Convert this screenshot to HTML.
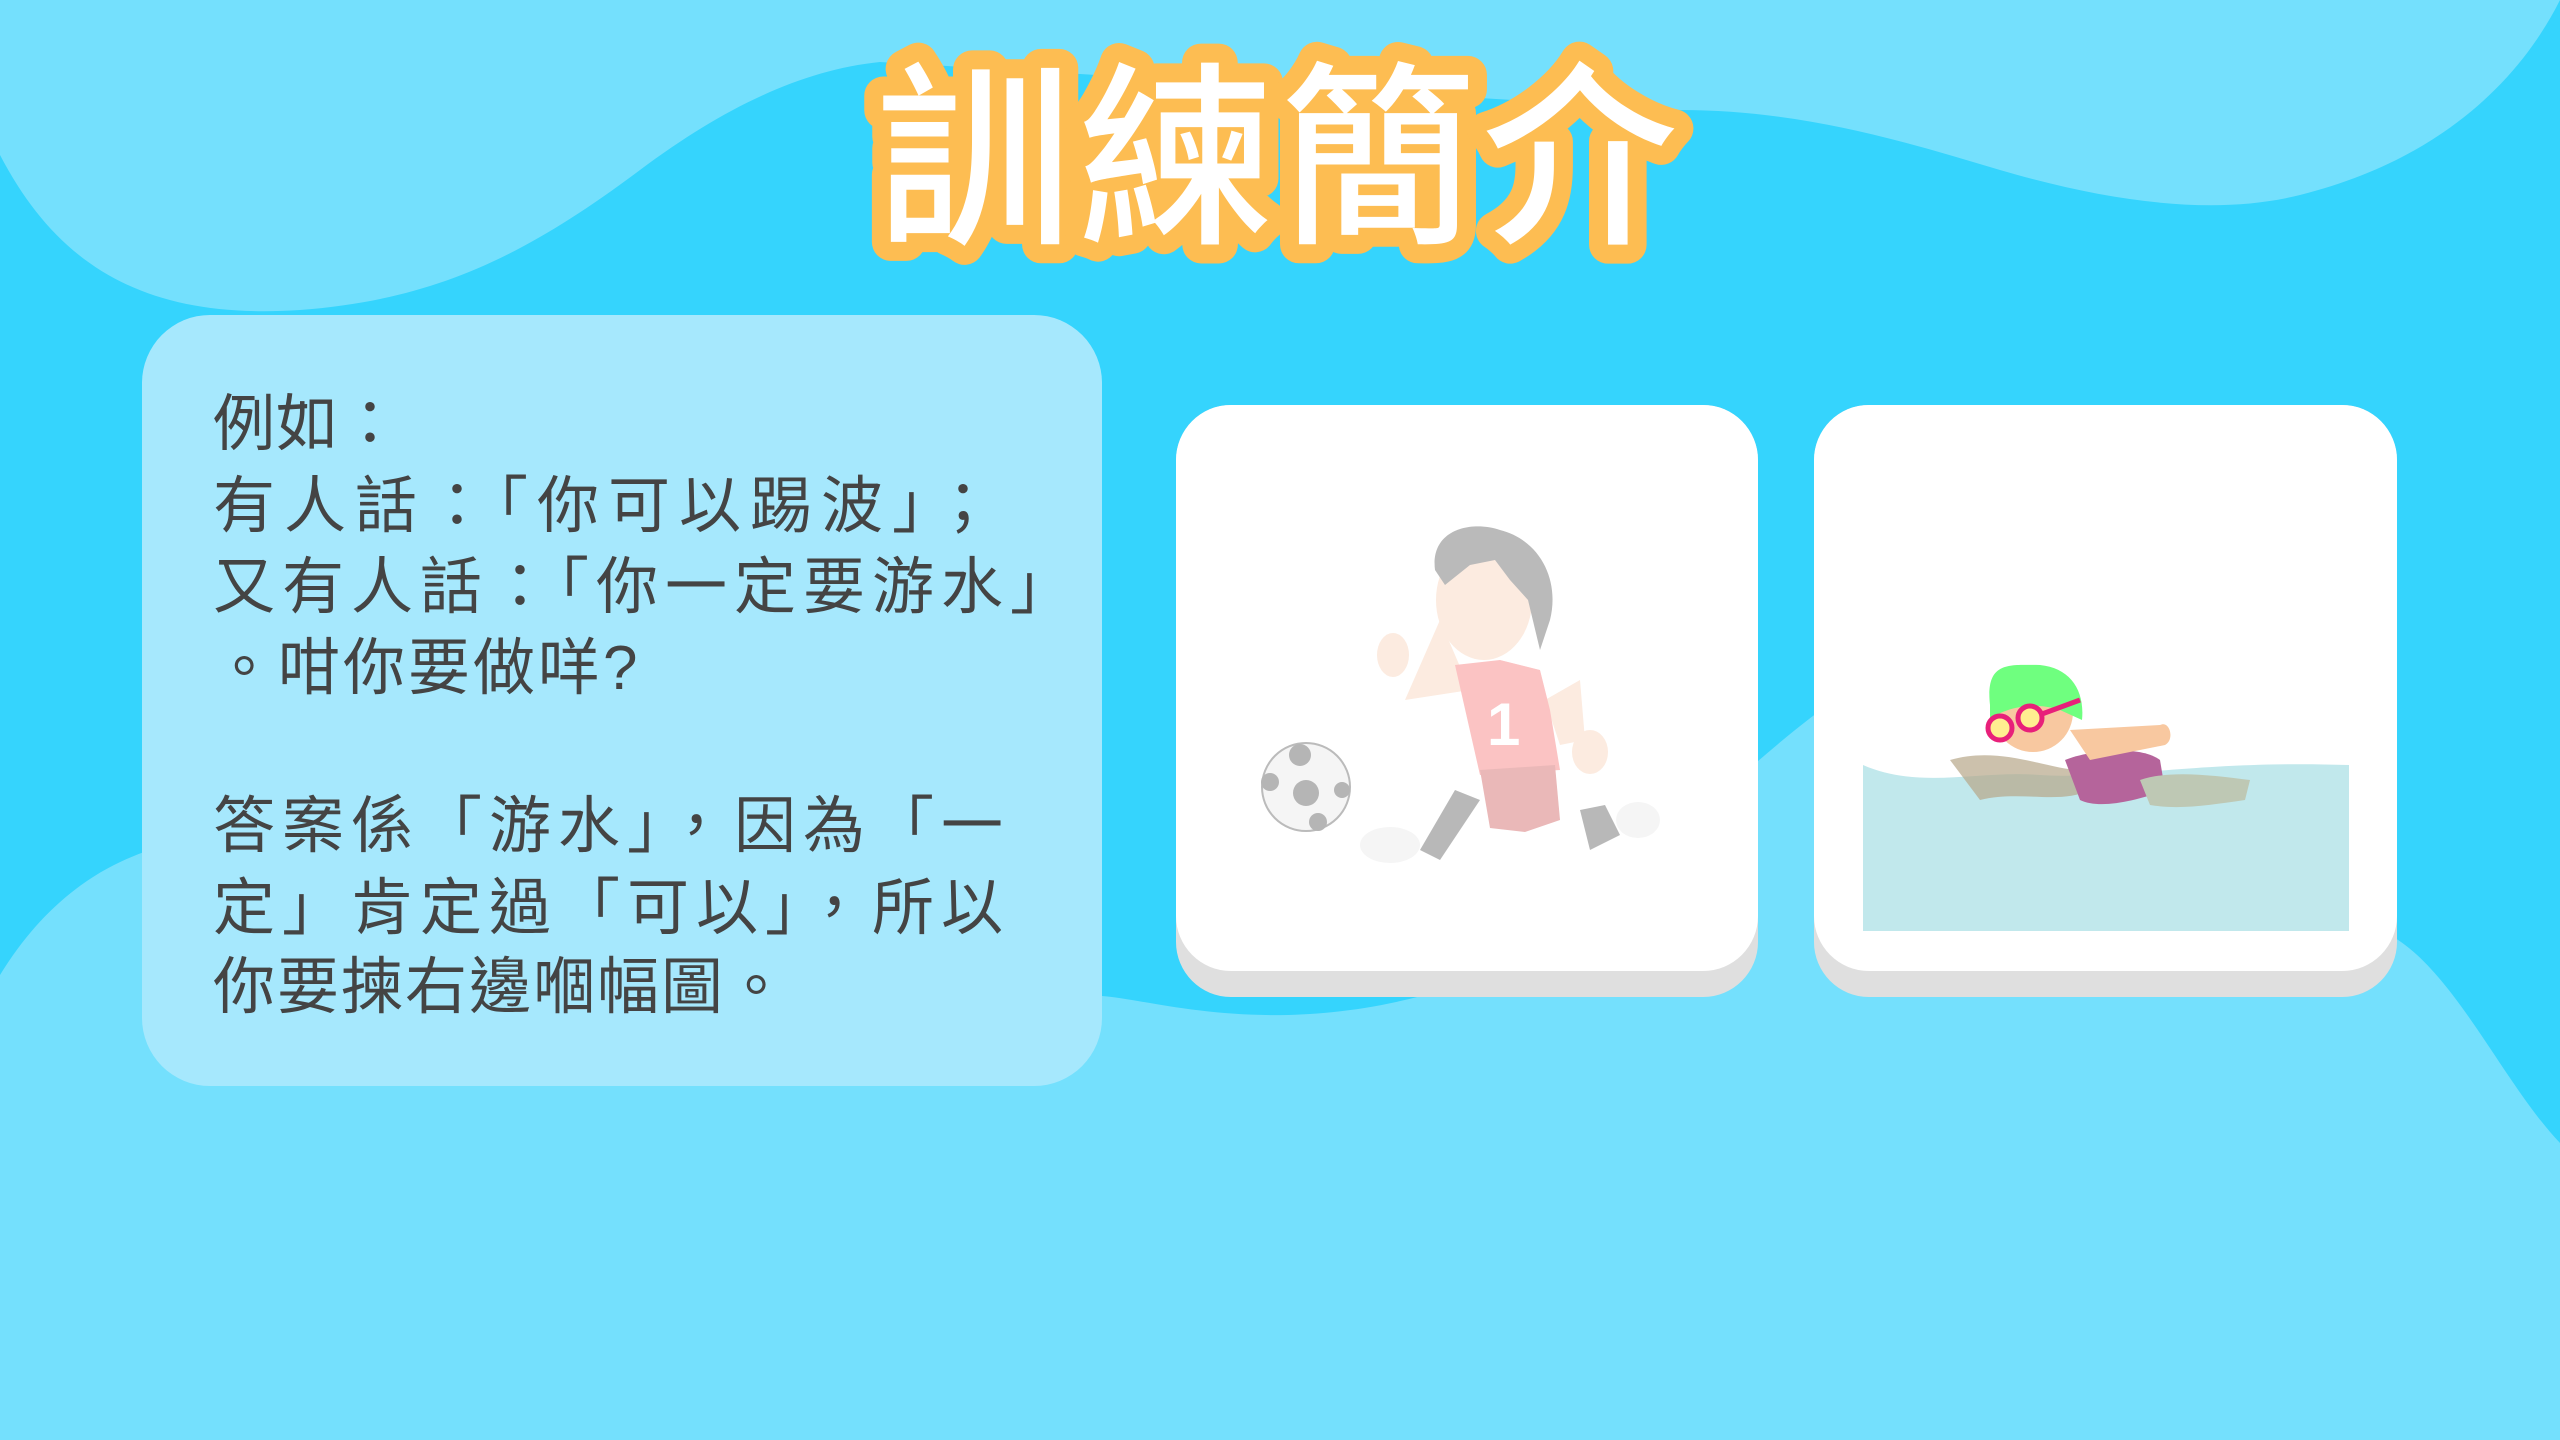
<!DOCTYPE html>
<html><head><meta charset="utf-8"><style>
html,body{margin:0;padding:0;width:2560px;height:1440px;overflow:hidden;background:#74e0fd}
svg{position:absolute;left:0;top:0}
.t{position:absolute;left:213px;font-family:"Liberation Sans","Noto Sans CJK TC",sans-serif;font-size:62px;color:#444;white-space:nowrap;line-height:80px}
</style></head><body>
<svg width="2560" height="1440" viewBox="0 0 2560 1440">
<path d="M0 155 C60 270 150 320 300 310 C430 300 520 260 640 170 C720 110 800 70 880 62 L1680 110 C1800 110 1900 140 2000 170 C2120 205 2220 215 2300 195 C2440 160 2520 80 2560 0 L2560 1143 C2500 1080 2450 960 2380 930 C2250 860 2100 630 1950 650 C1820 665 1700 840 1500 970 C1300 1050 1160 1000 1102 996 L150 850 C90 870 40 910 0 975 Z" fill="#35d4fd"/>
<rect x="142" y="315" width="960" height="771" rx="68" fill="#a6e8fd"/>
<rect x="1176" y="405" width="582" height="592" rx="55" fill="#dfdfdf"/>
<rect x="1176" y="405" width="582" height="566" rx="55" fill="#fff"/>
<rect x="1814" y="405" width="583" height="592" rx="55" fill="#dfdfdf"/>
<rect x="1814" y="405" width="583" height="566" rx="55" fill="#fff"/>
<text x="1280" y="228" text-anchor="middle" font-family="Noto Sans CJK TC, WenQuanYi Zen Hei, sans-serif" font-weight="500" font-size="196" letter-spacing="6" fill="#fff" stroke="#fdbd52" stroke-width="38" stroke-linejoin="round" paint-order="stroke fill">訓練簡介</text>
<!-- soccer boy -->
<g>
<circle cx="1306" cy="787" r="44" fill="#f5f5f5" stroke="#bbb" stroke-width="2"/>
<circle cx="1306" cy="793" r="13" fill="#b5b5b5"/><circle cx="1300" cy="755" r="11" fill="#b5b5b5"/><circle cx="1270" cy="782" r="9" fill="#b5b5b5"/><circle cx="1342" cy="790" r="8" fill="#b5b5b5"/><circle cx="1318" cy="822" r="9" fill="#b5b5b5"/>
<path d="M1405 700 L1440 620 L1470 690 Z" fill="#fcebe0"/>
<path d="M1545 700 L1580 680 L1585 740 L1560 745 Z" fill="#fcebe0"/>
<ellipse cx="1393" cy="655" rx="16" ry="22" fill="#fcebe0"/>
<ellipse cx="1590" cy="752" rx="18" ry="22" fill="#fcebe0"/>
<path d="M1455 665 L1500 660 L1540 670 L1550 710 L1560 770 L1480 775 Z" fill="#fbc3c3"/>
<path d="M1480 770 L1555 765 L1560 820 L1525 832 L1490 828 Z" fill="#eab8b8"/>
<path d="M1455 790 L1420 850 L1440 860 L1480 800 Z" fill="#b8b8b8"/>
<path d="M1580 810 L1590 850 L1620 835 L1605 805 Z" fill="#b8b8b8"/>
<ellipse cx="1390" cy="845" rx="30" ry="18" fill="#f5f5f5"/>
<ellipse cx="1638" cy="820" rx="22" ry="18" fill="#f5f5f5"/>
<ellipse cx="1484" cy="600" rx="48" ry="60" fill="#fcebe0"/>
<path d="M1435 570 C1430 530 1470 520 1500 530 C1540 540 1560 580 1550 620 L1540 650 L1528 600 L1510 580 L1495 560 L1470 565 L1445 585 Z" fill="#bababa"/>
<text x="1487" y="745" font-family="Liberation Sans" font-size="60" font-weight="700" fill="#fff">1</text>
</g>
<!-- swimmer -->
<path d="M1863 765 C1920 790 1980 770 2040 775 C2120 780 2200 760 2349 765 L2349 931 L1863 931 Z" fill="#c1e8ec"/>
<path d="M1950 760 C2000 745 2050 770 2080 770 L2090 790 C2060 805 2020 790 1980 800 Z" fill="#b6a689" opacity=".7"/>
<path d="M2065 760 C2090 750 2140 745 2160 760 L2165 790 C2140 800 2100 810 2080 800 Z" fill="#b5649b"/>
<path d="M2140 780 C2170 770 2210 775 2250 780 L2245 800 C2210 805 2180 810 2150 805 Z" fill="#bec8b4"/>
<path d="M2070 730 L2160 725 C2170 720 2175 740 2165 745 L2090 760 Z" fill="#f8c8a0"/>
<circle cx="2033" cy="712" r="40" fill="#f8c8a0"/>
<path d="M1990 705 C1985 660 2010 665 2040 665 C2070 668 2085 690 2082 720 L2060 710 C2030 700 2000 710 1990 720 Z" fill="#6fff7f"/>
<circle cx="2000" cy="728" r="12" fill="#ffef90" stroke="#e8207a" stroke-width="5"/>
<circle cx="2030" cy="718" r="12" fill="#ffef90" stroke="#e8207a" stroke-width="5"/>
<line x1="2042" y1="714" x2="2080" y2="700" stroke="#e8207a" stroke-width="5"/>
</svg>
<div class="t" style="top:385px;letter-spacing:1px">例如：</div>
<div class="t" style="top:467px;letter-spacing:9px">有人話：「你可以踢波」；</div>
<div class="t" style="top:548px;letter-spacing:7px">又有人話：「你一定要游水」</div>
<div class="t" style="top:629px;letter-spacing:3px">。咁你要做咩?</div>
<div class="t" style="top:787px;letter-spacing:7px">答案係「游水」，因為「一</div>
<div class="t" style="top:869px;letter-spacing:7px">定」肯定過「可以」，所以</div>
<div class="t" style="top:948px;letter-spacing:2px">你要揀右邊嗰幅圖。</div>
</body></html>
